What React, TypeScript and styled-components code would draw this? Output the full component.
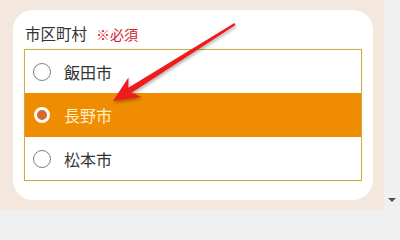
import styled, { createGlobalStyle } from 'styled-components';

const GlobalStyle = createGlobalStyle`
  html, body {
    margin: 0;
    padding: 0;
    background: #f0f0f0;
  }
  body {
    font-family: "Noto Sans CJK JP", "Noto Sans", sans-serif;
  }
`;

const Page = styled.div`
  display: flex;
  width: 400px;
  height: 210px;
  overflow: hidden;
`;

const Main = styled.main`
  position: relative;
  flex: 1;
  background: #f3e7de;
  padding: 10px 11px 10px 13px;
  box-sizing: border-box;
`;

const ScrollTrack = styled.div`
  width: 16px;
  background: #f0f0f0;
  display: flex;
  flex-direction: column;
  justify-content: flex-end;
  align-items: center;
  padding-bottom: 8px;
  box-sizing: border-box;
`;

const ScrollArrow = styled.span`
  width: 0;
  height: 0;
  border-left: 4px solid transparent;
  border-right: 4px solid transparent;
  border-top: 4px solid #505050;
`;

const Card = styled.section`
  background: #fff;
  border-radius: 20px;
  padding: 12px 11px 19px 11px;
  height: 190px;
  box-sizing: border-box;
`;

const Label = styled.div`
  display: flex;
  align-items: baseline;
  gap: 9px;
  height: 22px;
  line-height: 22px;
  margin-bottom: 5px;
  padding-left: 1px;
  font-size: 15.5px;
  color: #333;
`;

const Required = styled.span`
  font-size: 14px;
  color: #d01c2c;
`;

const OptionList = styled.div`
  border: 1px solid #c8aa55;
  box-shadow: 0 0 3px #fff2c4;
`;

const Option = styled.label<{ $checked?: boolean }>`
  display: flex;
  align-items: center;
  height: ${({ $checked }) => ($checked ? '44px' : '43px')};
  padding-left: 8px;
  gap: 13px;
  background: ${({ $checked }) => ($checked ? '#f08c00' : '#fff')};
  color: ${({ $checked }) => ($checked ? '#fff0c8' : '#333')};
  font-size: 16px;
  cursor: pointer;
`;

const Radio = styled.span<{ $checked?: boolean }>`
  width: 18px;
  height: 18px;
  box-sizing: border-box;
  border-radius: 50%;
  border: ${({ $checked }) => ($checked ? '3px solid #fff' : '1.5px solid #808080')};
  background: ${({ $checked }) => ($checked ? '#d9692c' : '#fff')};
  ${({ $checked }) => ($checked ? 'width: 16px; height: 16px; margin: 0 1px;' : '')}
`;

const ArrowLayer = styled.svg`
  position: absolute;
  left: 0;
  top: 0;
  width: 384px;
  height: 210px;
  pointer-events: none;
  overflow: visible;
`;

const cities = ['飯田市', '長野市', '松本市'];

export default function App() {
  const selected = '長野市';

  return (
    <>
      <GlobalStyle />
      <Page>
        <Main>
          <Card>
            <Label>
              市区町村<Required>※必須</Required>
            </Label>
            <OptionList>
              {cities.map((city) => (
                <Option key={city} $checked={city === selected}>
                  <Radio $checked={city === selected} />
                  {city}
                </Option>
              ))}
            </OptionList>
          </Card>
          <ArrowLayer viewBox="0 0 384 210">
            <defs>
              <filter id="arrowShadow" x="-20%" y="-20%" width="140%" height="140%">
                <feDropShadow dx="1" dy="2" stdDeviation="1.5" floodColor="#000" floodOpacity="0.3" />
              </filter>
            </defs>
            <polygon
              points="113,101 141.5,97 131.5,92.8 235.6,24.9 234.4,23.1 128.3,87.8 128.5,77.5"
              fill="#ee1a1a"
              filter="url(#arrowShadow)"
            />
          </ArrowLayer>
        </Main>
        <ScrollTrack>
          <ScrollArrow />
        </ScrollTrack>
      </Page>
    </>
  );
}
